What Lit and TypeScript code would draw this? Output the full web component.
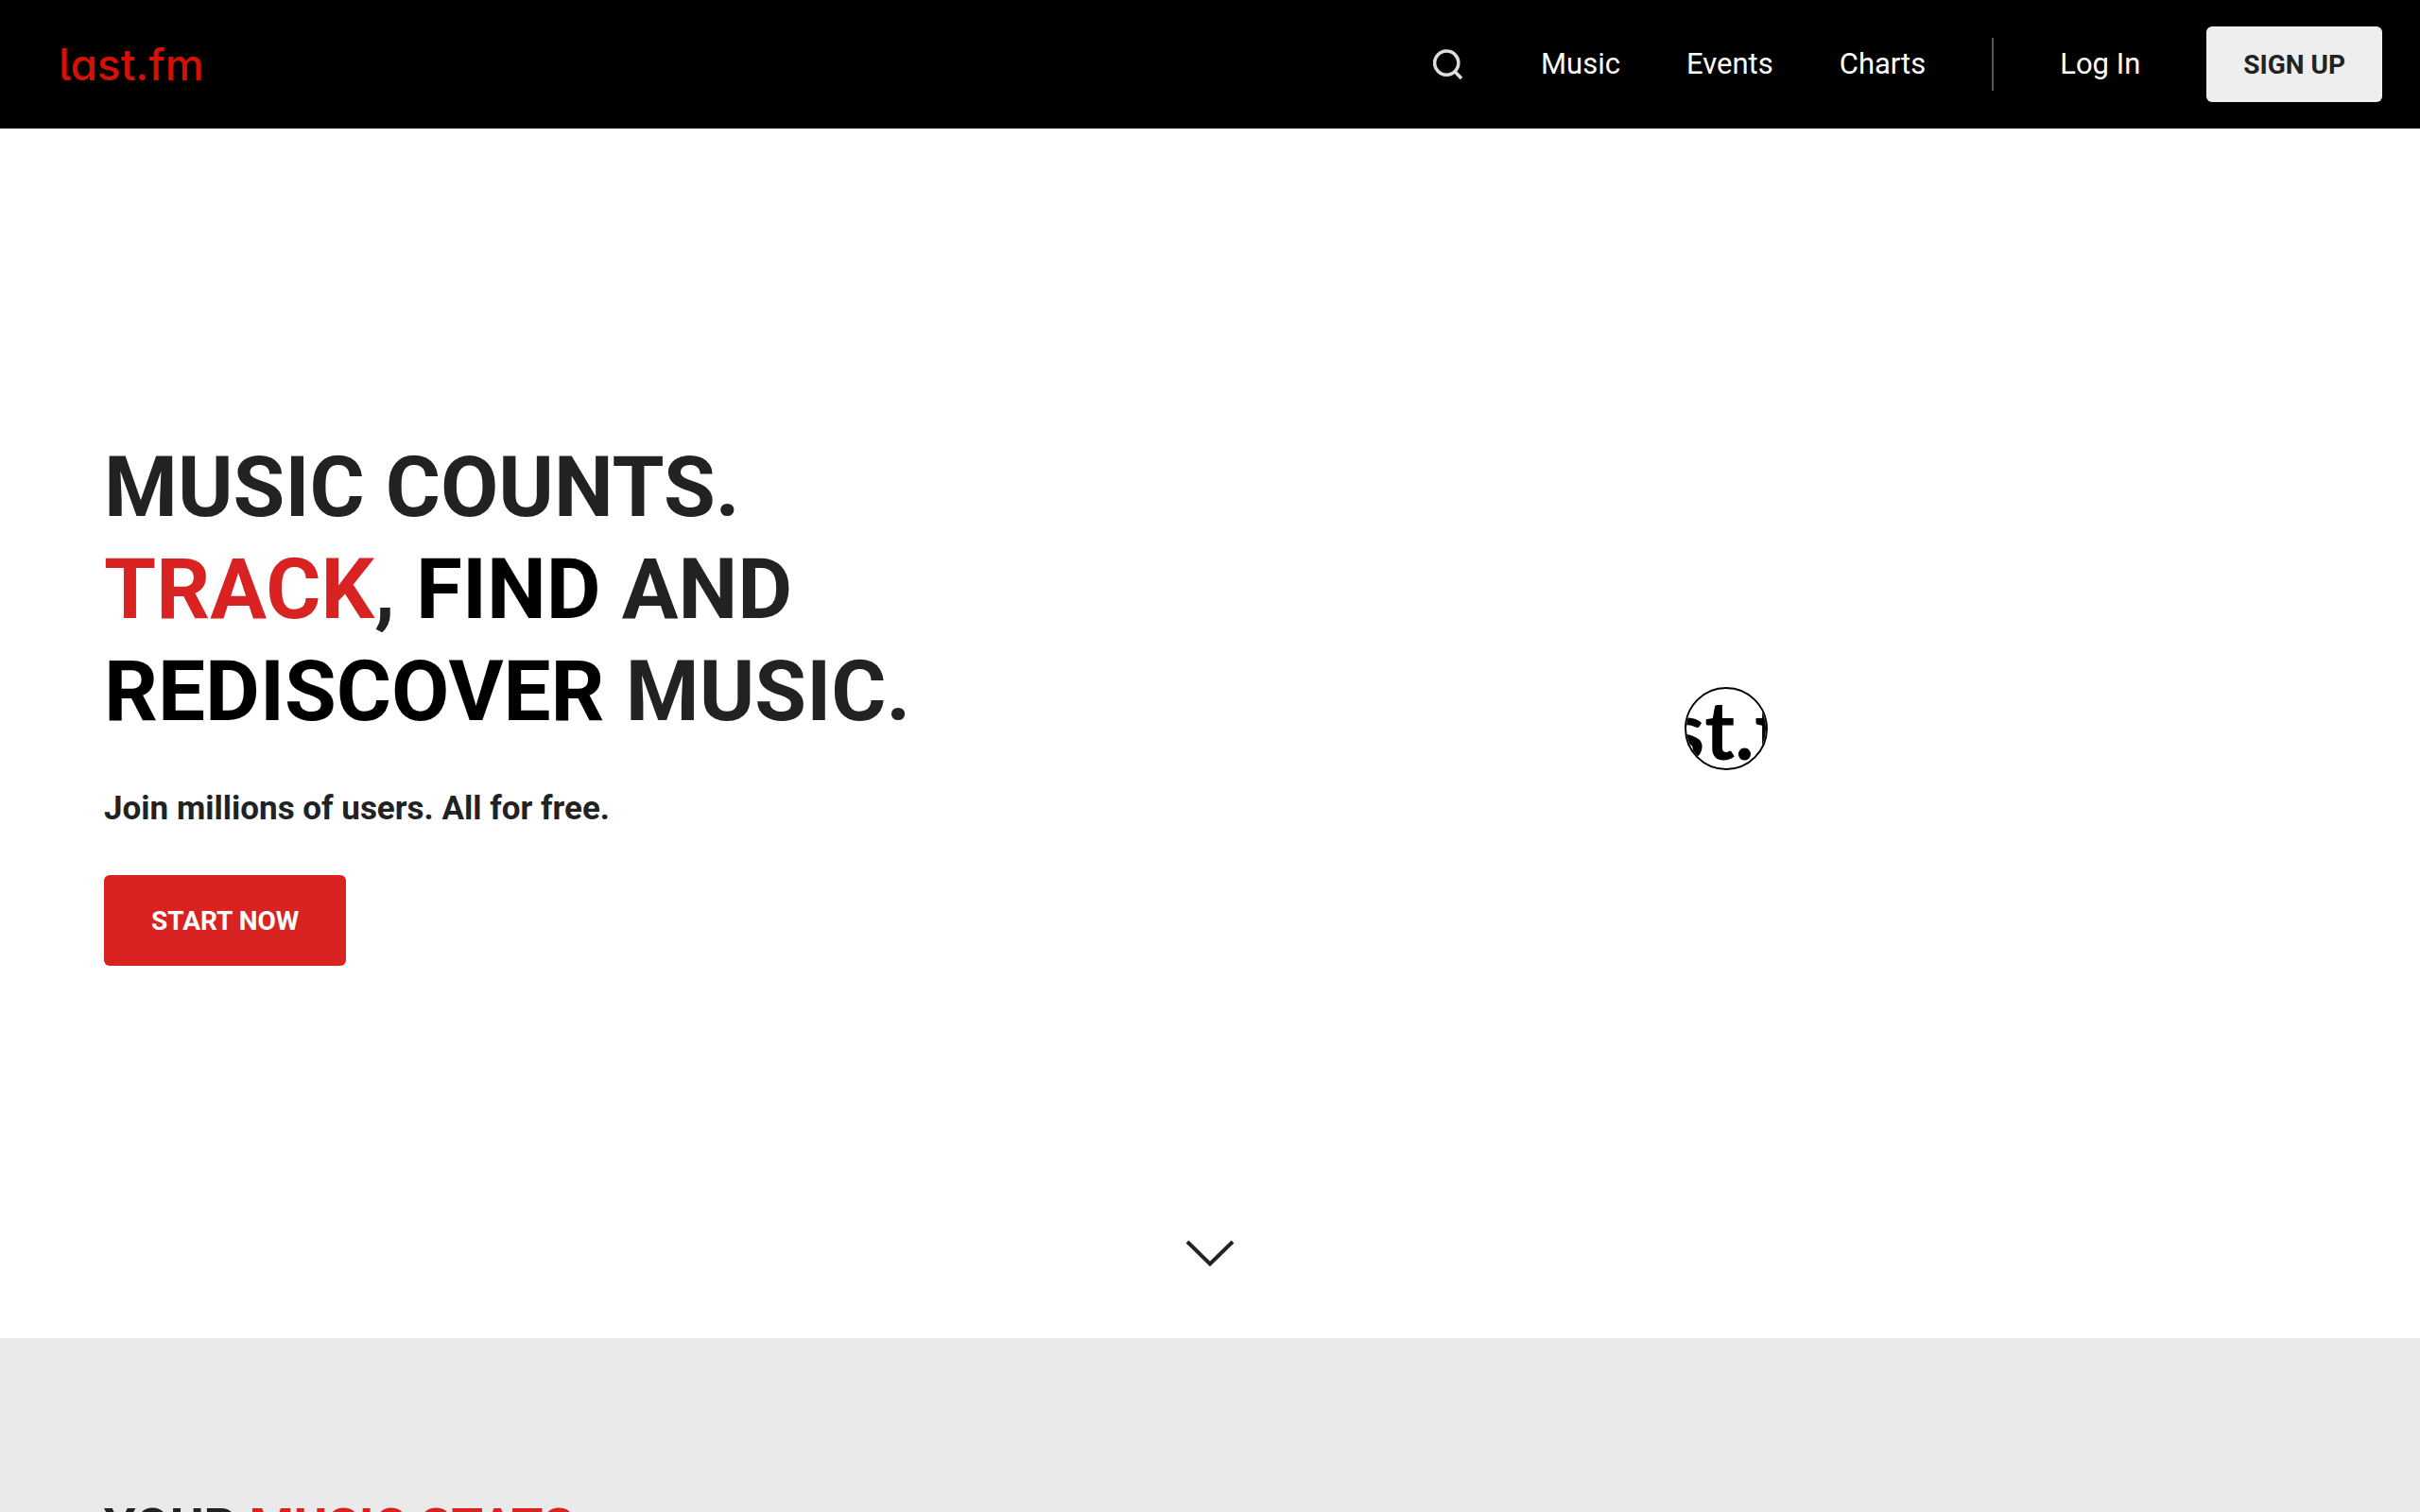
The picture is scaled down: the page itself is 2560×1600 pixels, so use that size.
import { LitElement, html, css } from "lit";
import { customElement } from "lit/decorators.js";

const NAV_LINKS = ["Music", "Events", "Charts"];

@customElement("site-header")
class SiteHeader extends LitElement {
  static styles = css`
    :host {
      display: block;
      background: #000;
    }
    .bar {
      display: flex;
      align-items: center;
      justify-content: space-between;
      height: 136px;
      box-sizing: border-box;
      padding: 0 40px 0 62px;
    }
    .logo {
      color: #d51007;
      font: 550 46px/56px Inter, sans-serif;
      font-feature-settings: "cv11", "cv05";
      text-decoration: none;
    }
    .nav {
      display: flex;
      align-items: center;
      gap: 70px;
    }
    .search {
      display: flex;
      padding: 0;
      margin-right: 12px;
      border: 0;
      background: none;
      cursor: pointer;
    }
    .search svg {
      display: block;
      width: 32px;
      height: 32px;
    }
    .link {
      color: #fff;
      font-size: 31px;
      line-height: 40px;
      text-decoration: none;
    }
    .divider {
      width: 2px;
      height: 56px;
      background: #555;
    }
    .signup {
      display: flex;
      align-items: center;
      height: 80px;
      padding: 0 39px;
      border-radius: 6px;
      background: #eee;
      color: #222;
      font-size: 28px;
      font-weight: 700;
      text-decoration: none;
    }
  `;

  render() {
    return html`
      <header class="bar">
        <a class="logo" href="#">last.fm</a>
        <nav class="nav">
          <button class="search" type="button" aria-label="Search">
            <svg viewBox="0 0 32 32" fill="none" stroke="#ddd" stroke-width="3.6">
              <circle cx="14.2" cy="14.6" r="12.6" />
              <path d="M23 23.8 30 31" />
            </svg>
          </button>
          ${NAV_LINKS.map((name) => html`<a class="link" href="#">${name}</a>`)}
          <span class="divider"></span>
          <a class="link" href="#">Log In</a>
          <a class="signup" href="#">SIGN UP</a>
        </nav>
      </header>
    `;
  }
}

@customElement("hero-section")
class HeroSection extends LitElement {
  static styles = css`
    :host {
      display: block;
    }
    .hero {
      display: grid;
      grid-template-columns: 7fr 8fr;
      grid-template-rows: 1fr auto;
      row-gap: 72px;
      align-items: center;
      min-height: 80vh;
      box-sizing: border-box;
      padding: 108px 110px 76px;
      background: #fff;
    }
    .title {
      margin: 0;
      font-size: 89px;
      line-height: 108px;
      font-weight: 700;
      white-space: nowrap;
    }
    .accent {
      color: #d92323;
    }
    .strong {
      color: #000;
    }
    .lead {
      margin: 48px 0;
      font-size: 35px;
      line-height: 44px;
      font-weight: 700;
    }
    .start {
      display: inline-flex;
      align-items: center;
      height: 96px;
      padding: 0 50px;
      border-radius: 6px;
      background: #d92323;
      color: #fff;
      font-size: 28px;
      font-weight: 700;
      text-decoration: none;
      vertical-align: top;
    }
    .badge {
      display: flex;
      align-items: center;
      justify-content: center;
      justify-self: center;
      width: 88px;
      height: 88px;
      box-sizing: border-box;
      margin-top: 58px;
      border: 2px solid #000;
      border-radius: 50%;
      overflow: hidden;
      color: #000;
      font: 700 86px/86px Lato, sans-serif;
      white-space: nowrap;
    }
    .down {
      grid-column: 1 / -1;
      justify-self: center;
    }
    .down svg {
      display: block;
      width: 52px;
      height: 28px;
    }
  `;

  render() {
    return html`
      <section class="hero">
        <div>
          <h1 class="title">
            MUSIC COUNTS.<br />
            <span class="accent">TRACK</span>, <span class="strong">FIND</span> AND<br />
            <span class="strong">REDISCOVER</span> MUSIC.
          </h1>
          <p class="lead">Join millions of users. All for free.</p>
          <a class="start" href="#">START NOW</a>
        </div>
        <div class="badge"><span>st.f</span></div>
        <a class="down" href="#stats" aria-label="Scroll down">
          <svg viewBox="0 0 52 28" fill="none" stroke="#222" stroke-width="4">
            <path d="M2 2 26 25.5 50 2" />
          </svg>
        </a>
      </section>
    `;
  }
}

@customElement("stats-section")
class StatsSection extends LitElement {
  static styles = css`
    :host {
      display: block;
      background: #eaeaea;
    }
    .stats {
      padding: 168px 110px;
    }
    .title {
      margin: 0;
      font-size: 54px;
      line-height: 64px;
      font-weight: 700;
    }
    .accent {
      color: #d92323;
    }
  `;

  render() {
    return html`
      <section class="stats">
        <h2 class="title">YOUR <span class="accent">MUSIC STATS</span></h2>
      </section>
    `;
  }
}

@customElement("app-root")
class AppRoot extends LitElement {
  static styles = css`
    :host {
      display: flex;
      flex-direction: column;
      height: 100vh;
      overflow: hidden;
      color: #222;
      font-family: Roboto, "Liberation Sans", sans-serif;
    }
    .fixed {
      flex: none;
    }
    .fill {
      flex: 1 0 auto;
    }
  `;

  render() {
    return html`
      <site-header class="fixed"></site-header>
      <hero-section class="fixed"></hero-section>
      <stats-section class="fill" id="stats"></stats-section>
    `;
  }
}
